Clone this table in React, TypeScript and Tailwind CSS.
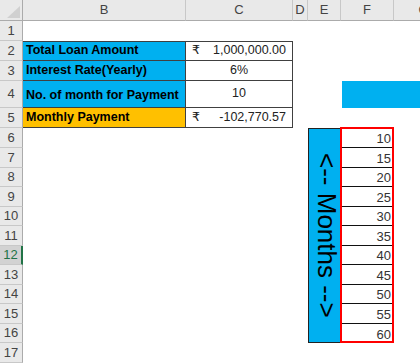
const font = "font-['Liberation_Sans','DejaVu_Sans',sans-serif]";

const colHeads = [
  { l: "B", pos: "col-start-2" },
  { l: "C", pos: "col-start-3" },
  { l: "D", pos: "col-start-4" },
  { l: "E", pos: "col-start-5" },
  { l: "F", pos: "col-start-6" },
  { l: "G", pos: "col-start-7" },
];

const rowHeads = [
  "row-start-2",
  "row-start-3",
  "row-start-4",
  "row-start-5",
  "row-start-6",
  "row-start-7",
  "row-start-8",
  "row-start-9",
  "row-start-10",
  "row-start-11",
  "row-start-12",
  "row-start-13",
  "row-start-14",
  "row-start-15",
  "row-start-16",
  "row-start-17",
  "row-start-18",
];

const months = [
  { v: 10, pos: "row-start-7" },
  { v: 15, pos: "row-start-8" },
  { v: 20, pos: "row-start-9" },
  { v: 25, pos: "row-start-10" },
  { v: 30, pos: "row-start-11" },
  { v: 35, pos: "row-start-12" },
  { v: 40, pos: "row-start-13" },
  { v: 45, pos: "row-start-14" },
  { v: 50, pos: "row-start-15" },
  { v: 55, pos: "row-start-16" },
  { v: 60, pos: "row-start-17" },
];

const labelCell =
  "col-start-2 flex items-end pl-[3px] pb-[2px] text-[12.5px] font-bold leading-[16px] text-black border-r border-b border-[#404040]";
const valueCell =
  "col-start-3 flex items-end pb-[2px] text-[12.5px] leading-[16px] text-[#222] border-r border-b border-[#404040]";

export default function App() {
  return (
    <div className={`w-[420px] h-[363px] overflow-hidden bg-white ${font}`}>
      <div className="grid grid-cols-[23px_163px_107px_15px_33px_53px_60px] grid-rows-[21px_20px_20px_20px_27px_20px_20px_20px_19px_20px_19px_20px_19px_20px_19px_20px_19px_20px]">
        {/* corner */}
        <div className="col-start-1 row-start-1 flex items-end justify-end bg-[#e9e9e9] border-r border-b border-[#ababab] pr-[2px] pb-[2px]">
          <svg width="13" height="12" viewBox="0 0 13 12">
            <polygon points="0,12 13,12 13,0" fill="#d0d0d0" />
          </svg>
        </div>

        {colHeads.map((c) => (
          <div
            key={c.l}
            className={`${c.pos} row-start-1 flex items-center justify-center bg-[#e9e9e9] border-r border-b border-r-[#c8c8c8] border-b-[#ababab] text-[13px] text-[#444]`}
          >
            {c.l}
          </div>
        ))}

        {rowHeads.map((pos, i) =>
          i === 11 ? (
            <div
              key={pos}
              className={`${pos} col-start-1 flex items-center justify-center bg-[#d2d2d2] border-b border-b-[#c8c8c8] border-r-2 border-r-[#217346] text-[13px] text-[#217346]`}
            >
              {i + 1}
            </div>
          ) : (
            <div
              key={pos}
              className={`${pos} col-start-1 flex items-center justify-center bg-[#e9e9e9] border-r border-b border-r-[#ababab] border-b-[#c8c8c8] text-[13px] text-[#444]`}
            >
              {i + 1}
            </div>
          )
        )}

        {/* loan table */}
        <div className={`${labelCell} row-start-3 bg-[#00b0f0] border-t`}>Total Loan Amount</div>
        <div className={`${valueCell} row-start-3 justify-between px-[6px] border-t`}>
          <span>₹</span>
          <span>1,000,000.00</span>
        </div>

        <div className={`${labelCell} row-start-4 bg-[#00b0f0]`}>Interest Rate(Yearly)</div>
        <div className={`${valueCell} row-start-4 justify-center`}>6%</div>

        <div className={`${labelCell} row-start-5 bg-[#00b0f0] pb-[4px]`}>No. of month for Payment</div>
        <div className={`${valueCell} row-start-5 justify-center pb-[6px]`}>10</div>

        <div className={`${labelCell} row-start-6 bg-[#ffc000]`}>Monthly Payment</div>
        <div className={`${valueCell} row-start-6 justify-between px-[6px]`}>
          <span>₹</span>
          <span>-102,770.57</span>
        </div>

        {/* blue bar F4:G4 */}
        <div className="col-start-6 col-end-8 row-start-5 bg-[#00b0f0] ml-px"></div>

        {/* months label */}
        <div className="col-start-5 row-start-7 row-end-18 flex items-center bg-[#00b0f0] border-l border-t border-b border-[#222] pl-[5px]">
          <span className="[writing-mode:vertical-rl] text-[26px] leading-[26px] text-black whitespace-nowrap">
            {"<-- Months -->"}
          </span>
        </div>

        {months.map((m, i) => (
          <div
            key={m.v}
            className={`${m.pos} col-start-6 flex items-end justify-end pr-[3px] text-[13px] leading-[16px] text-[#333] ${
              i < months.length - 1 ? "border-b border-[#111]" : ""
            }`}
          >
            {m.v}
          </div>
        ))}

        <div className="col-start-6 row-start-7 row-end-18 -ml-px -mt-px border-2 border-[#ff0000] pointer-events-none"></div>
      </div>
    </div>
  );
}
